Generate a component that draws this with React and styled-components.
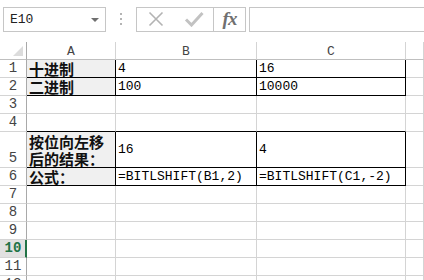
import React from "react";
import styled, { createGlobalStyle } from "styled-components";

const Global = createGlobalStyle`
  html, body { margin: 0; padding: 0; background: #fff; }
  body { width: 424px; height: 280px; overflow: hidden; font-family: "Liberation Mono", "Noto Sans CJK SC", monospace; }
`;

const Page = styled.div`
  display: flex;
  flex-direction: column;
  width: 424px;
  height: 280px;
  overflow: hidden;
`;

const Toolbar = styled.div`
  display: flex;
  align-items: center;
  height: 24px;
  margin: 7px 0 11px 3px;
`;

const NameBox = styled.div`
  position: relative;
  box-sizing: border-box;
  width: 103px;
  height: 25px;
  border: 1px solid #c6c6c6;
  display: flex;
  align-items: center;
  padding-left: 6px;
  font-size: 13px;
  color: #222;
`;

const Arrow = styled.span`
  position: absolute;
  right: 6px;
  top: 10px;
  width: 0;
  height: 0;
  border-left: 4px solid transparent;
  border-right: 4px solid transparent;
  border-top: 4px solid #6f6f6f;
`;

const Dots = styled.div`
  width: 30px;
  display: flex;
  flex-direction: column;
  align-items: center;
  gap: 3px;
  & > span { width: 2px; height: 2px; background: #b4b4b4; }
`;

const ButtonBox = styled.div`
  box-sizing: border-box;
  display: flex;
  height: 25px;
  border: 1px solid #c6c6c6;
`;

const IconButton = styled.div`
  box-sizing: border-box;
  width: ${p => p.$w}px;
  display: flex;
  align-items: center;
  justify-content: center;
  border-left: ${p => (p.$divide ? "1px solid #c6c6c6" : "none")};
`;

const Fx = styled.span`
  font-family: "Liberation Serif", serif;
  font-style: italic;
  font-weight: bold;
  font-size: 19px;
  color: #707070;
  letter-spacing: -1px;
`;

const FormulaInput = styled.div`
  box-sizing: border-box;
  flex: 1;
  height: 25px;
  margin-left: 3px;
  border: 1px solid #c6c6c6;
  border-right: none;
`;

const Sheet = styled.div`
  display: flex;
  flex-direction: column;
`;

const Row = styled.div`
  display: grid;
  grid-template-columns: 27px 89px 141px 149px 1fr;
  height: ${p => p.$h}px;
`;

const Corner = styled.div`
  position: relative;
  box-sizing: border-box;
  border-right: 1px solid #a9a9a9;
  border-bottom: 1px solid #bfbfbf;
  &::after {
    content: "";
    position: absolute;
    right: 3px;
    bottom: 3px;
    width: 0;
    height: 0;
    border-left: 10px solid transparent;
    border-bottom: 10px solid #dcdcdc;
  }
`;

const ColHead = styled.div`
  box-sizing: border-box;
  display: flex;
  align-items: center;
  justify-content: center;
  border-right: 1px solid #d4d4d4;
  border-bottom: 1px solid #bfbfbf;
  font-size: 13px;
  color: #444;
  padding-top: 1px;
`;

const RowHead = styled.div`
  box-sizing: border-box;
  display: flex;
  align-items: flex-end;
  justify-content: center;
  border-bottom: 1px solid #d4d4d4;
  border-right: ${p => (p.$active ? "2px solid #217346" : "1px solid #a9a9a9")};
  background: ${p => (p.$active ? "#e1e1e1" : "#fff")};
  color: ${p => (p.$active ? "#217346" : "#444")};
  font-weight: ${p => (p.$active ? "bold" : "normal")};
  font-size: 14px;
  line-height: 17px;
  ${p => (p.$active ? "padding-left: 1px;" : "")}
`;

const Cell = styled.div`
  box-sizing: border-box;
  display: flex;
  align-items: ${p => (p.$center ? "center" : "flex-end")};
  padding: 0 2px;
  overflow: hidden;
  white-space: nowrap;
  border-right: 1px solid ${p => (p.$boxR ? "#000" : "#d4d4d4")};
  border-bottom: 1px solid ${p => (p.$boxB ? "#000" : "#d4d4d4")};
  background: ${p => (p.$fill ? "#f0f0f0" : "#fff")};
  font-size: 13px;
  line-height: 16px;
  color: #000;
`;

const Label = styled.span`
  font-family: "Noto Sans CJK SC", sans-serif;
  font-weight: bold;
  font-size: 15px;
  line-height: ${p => (p.$two ? "17px" : "16px")};
  color: #111;
  white-space: normal;
  align-self: ${p => (p.$two ? "flex-start" : "center")};
  margin-top: ${p => (p.$two ? "1px" : "0")};
`;

const rows = [
  { n: 1, h: 18, a: "十进制", b: "4", c: "16", box: true },
  { n: 2, h: 18, a: "二进制", b: "100", c: "10000", box: true },
  { n: 3, h: 18 },
  { n: 4, h: 18, bottomOnly: true },
  { n: 5, h: 36, a: ["按位向左移", "后的结果："], b: "16", c: "4", box: true, center: true },
  { n: 6, h: 18, a: "公式：", b: "=BITLSHIFT(B1,2)", c: "=BITLSHIFT(C1,-2)", box: true },
  { n: 7, h: 18 },
  { n: 8, h: 18 },
  { n: 9, h: 18 },
  { n: 10, h: 18, active: true },
  { n: 11, h: 18 },
  { n: 12, h: 18 },
];

export default function App() {
  return (
    <Page>
      <Global />
      <Toolbar>
        <NameBox>
          E10
          <Arrow />
        </NameBox>
        <Dots>
          <span />
          <span />
          <span />
        </Dots>
        <ButtonBox>
          <IconButton $w={38}>
            <svg width="16" height="16" viewBox="0 0 16 16">
              <path d="M1.5 1.5 L14.5 14.5 M14.5 1.5 L1.5 14.5" stroke="#b3b3b3" strokeWidth="1.6" fill="none" />
            </svg>
          </IconButton>
          <IconButton $w={38}>
            <svg width="20" height="16" viewBox="0 0 20 16">
              <path d="M2 8.5 L7.5 14 L18.5 2" stroke="#c2c2c2" strokeWidth="3" fill="none" />
            </svg>
          </IconButton>
          <IconButton $w={32} $divide>
            <Fx>fx</Fx>
          </IconButton>
        </ButtonBox>
        <FormulaInput />
      </Toolbar>
      <Sheet>
        <Row $h={18}>
          <Corner />
          <ColHead>A</ColHead>
          <ColHead>B</ColHead>
          <ColHead>C</ColHead>
          <ColHead />
        </Row>
        {rows.map(r => (
          <Row key={r.n} $h={r.h}>
            <RowHead $active={r.active}>{r.n}</RowHead>
            <Cell $fill={!!r.a} $boxR={r.box} $boxB={r.box || r.bottomOnly}>
              {Array.isArray(r.a) ? (
                <Label $two>
                  {r.a[0]}
                  <br />
                  {r.a[1]}
                </Label>
              ) : r.a ? (
                <Label>{r.a}</Label>
              ) : null}
            </Cell>
            <Cell $boxR={r.box} $boxB={r.box || r.bottomOnly} $center={r.center}>
              {r.b}
            </Cell>
            <Cell $boxR={r.box} $boxB={r.box || r.bottomOnly} $center={r.center}>
              {r.c}
            </Cell>
            <Cell />
          </Row>
        ))}
      </Sheet>
    </Page>
  );
}
